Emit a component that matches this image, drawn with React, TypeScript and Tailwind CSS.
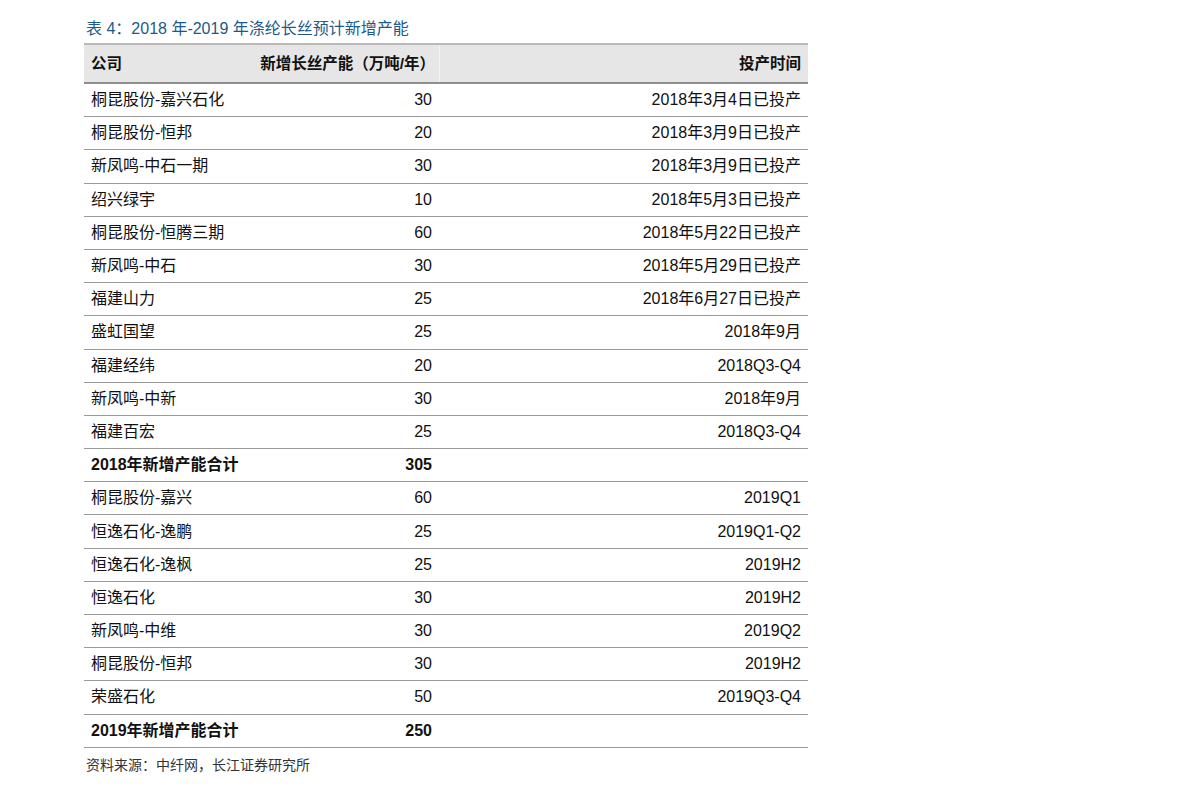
import React from 'react';

type Row = { name: string; cap: string; time: string; total?: boolean };

const rows: Row[] = [
  { name: '桐昆股份-嘉兴石化', cap: '30', time: '2018年3月4日已投产' },
  { name: '桐昆股份-恒邦', cap: '20', time: '2018年3月9日已投产' },
  { name: '新凤鸣-中石一期', cap: '30', time: '2018年3月9日已投产' },
  { name: '绍兴绿宇', cap: '10', time: '2018年5月3日已投产' },
  { name: '桐昆股份-恒腾三期', cap: '60', time: '2018年5月22日已投产' },
  { name: '新凤鸣-中石', cap: '30', time: '2018年5月29日已投产' },
  { name: '福建山力', cap: '25', time: '2018年6月27日已投产' },
  { name: '盛虹国望', cap: '25', time: '2018年9月' },
  { name: '福建经纬', cap: '20', time: '2018Q3-Q4' },
  { name: '新凤鸣-中新', cap: '30', time: '2018年9月' },
  { name: '福建百宏', cap: '25', time: '2018Q3-Q4' },
  { name: '2018年新增产能合计', cap: '305', time: '', total: true },
  { name: '桐昆股份-嘉兴', cap: '60', time: '2019Q1' },
  { name: '恒逸石化-逸鹏', cap: '25', time: '2019Q1-Q2' },
  { name: '恒逸石化-逸枫', cap: '25', time: '2019H2' },
  { name: '恒逸石化', cap: '30', time: '2019H2' },
  { name: '新凤鸣-中维', cap: '30', time: '2019Q2' },
  { name: '桐昆股份-恒邦', cap: '30', time: '2019H2' },
  { name: '荣盛石化', cap: '50', time: '2019Q3-Q4' },
  { name: '2019年新增产能合计', cap: '250', time: '', total: true },
];

const font = { fontFamily: '"Liberation Sans", "Noto Sans CJK SC", sans-serif' };

export default function App() {
  return (
    <div className="w-[1191px] h-[791px] bg-white text-[#111]" style={font}>
      <div className="pl-[84px] pt-[18px] w-[808px]">
        <div className="text-[16px] leading-[22px] text-[#1c5a8c] pl-[2px]">
          表 4：2018 年-2019 年涤纶长丝预计新增产能
        </div>
        <div className="mt-[3px] w-[724px]">
          <div className="flex h-[41px] bg-[#e6e6e6] border-t-2 border-t-[#b9b9b9] border-b-2 border-b-[#8f8f8f] text-[15.5px] font-bold items-center">
            <div className="w-[171px] pl-[7px]">公司</div>
            <div className="w-[184px] pr-[4px] text-right h-full flex items-center justify-end whitespace-nowrap">新增长丝产能（万吨/年）</div>
            <div className="flex-1 pr-[7px] text-right h-full flex items-center justify-end border-l border-l-[#f3f3f3]">投产时间</div>
          </div>
          {rows.map((r, i) => (
            <div
              key={i}
              className={`flex h-[33.2px] items-center border-b border-b-[#9a9a9a] text-[16px] ${r.total ? 'font-bold' : ''}`}
            >
              <div className="w-[171px] pl-[7px] whitespace-nowrap">{r.name}</div>
              <div className="w-[184px] pr-[7px] text-right">{r.cap}</div>
              <div className="flex-1 pr-[7px] text-right whitespace-nowrap">{r.time}</div>
            </div>
          ))}
          <div className="text-[14px] leading-[20px] text-[#333] mt-[7px] pl-[2px]">
            资料来源：中纤网，长江证券研究所
          </div>
        </div>
      </div>
    </div>
  );
}
